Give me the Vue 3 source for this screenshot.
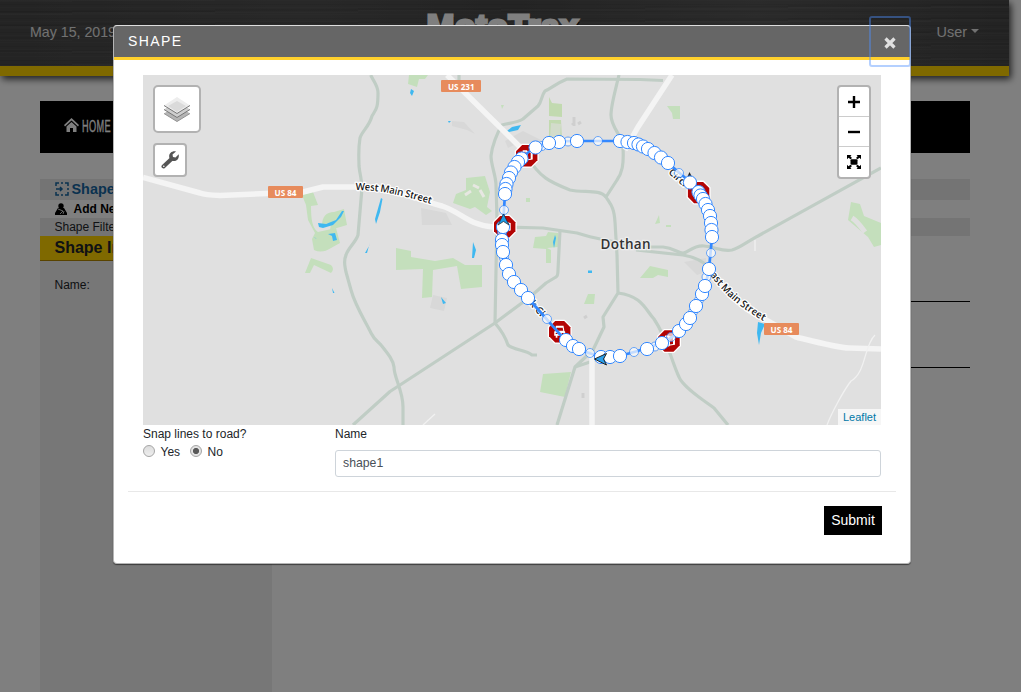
<script setup>
import { ref } from 'vue'

const snap = ref('no')
const name = ref('shape1')

const local = [
  'M370.7 75C375 84 378 86 378 93C378 109 376 109 372 116C369 127 362 131 360 138C358 150 359 158 359 166C360 176 362 180 362 188L358 235C356 242 348 248 346 255C343 262 345 266 346 272L351 290C355 305 364 319 371 333C375 341 378 341 381 345C389 355 393 360 394 367C394 378 403 390 403 407L403 425',
  'M353 425L390 391.500L495 323L530 297L546 283L556 277Q558 276 558 270L560 230',
  'M459 75V82',
  'M663 80.500L640 79.500L567 79C555 84 552 88 545 91C541 96 542 102 538 106L523 119C517 123 508 123 502 125C497 133 492 146 491 156C491 165 496 176 496 185L497 218L495 323C501 330 505 336 508 345C513 350 526 350 532 355H537',
  'M619 75C615 92 611 105 611 115C611 128 623 136 623 148C624 165 622 173 617 180L606 197C610 204 614 206 615 222L617 255L618 293L603 317L604 327L593 350L575 367L557 425',
  'M605 357L575 367',
  'M618 293C642 296 645 309 654 319C667 338 670 357 679 377C683 387 703 400 714 408L728 425',
  'M526 155C540 178 550 182 570 190C584 193 600 189 606 197',
  'M505 227L543 228L577 233C598 240 612 240 636 247L663 247C674 248 678 253 683 253C688 253 693 245 704 246C716 247 722 252 732 250C740 248 748 241 758 236L881 168',
  'M636 250L683 255Q700 258 708 267',
]
const major = [
  'M447 75L520 147',
  'M672 75L638 127L625 150',
  'M592 357V425',
  'M143 177.500L200 193Q205 195 220 195.500L303 192L323 187H362C395 188 422 201 442 206C463 213 466 224 493 227',
  'M708 267C725 294 744 310 766 320L796 337C820 343 839 348 849 348L881 349',
]
const parks = [
  'M302 195L313 192L318 205L311 206C311 218 312 228 318 232L336 228L340 243L331 248Q322 254 314 250L312 239L315 233L308 220L306 205Z',
  'M322 226Q322 212 334 212L344 209L347 225L330 230Q333 219 322 226Z',
  'M311 258L331 265Q335 269 331 273L314 265L310 273H305Z',
  'M396 248L411 251V257L435 261L453 258L465 265H482V287L461 289L457 266L433 270L432 297L422 298L423 269L396 270Z',
  'M466 178L485 176L490 192L487 207L492 211L486 215L475 207L470 209L453 203L456 194L466 190Z',
  'M409 75H428L425 79H419L417 87L408 84Z',
  'M535 237L546 236L548 232L558 233V247L547 248L551 250V263H546V249L533 248Z',
  'M543 374L571 372L565 397L540 392Z',
  'M667 106H680V119H673L672 113Z',
  'M640 278L650 266L668 270V277L658 275L653 278Z',
  'M851 202L860 204L864 216L881 223V245L874 247L868 237L848 220Z',
  'M659 215L660 223L655 224ZM666 225H671V227H666ZM674 171H680V175H674ZM501 105H504L502 109ZM526 198H530V202H526ZM588 294H595L594 304H584Z',
]
const water = [
  'M318 223L326 224L336 220L342 211L344 211L341 217L333 225L323 228L319 227Z',
  'M381 198L382.500 199L380 212L376 224L375 219Z',
  'M370 242L367 253L365 253L369 246Z',
  'M328 234L335 233L337 240L333 241L332 236ZM314 237L317 239L315 238Z',
  'M332 288L334.500 293H333Z',
  'M411 89L414 91L412 96L410 93Z', 'M448 121L451 121L449 123Z',
  'M507 131L512 127L521 125L518 130L509 132Z',
  'M473 242L476 250L474 258H472ZM441 297L446 303L443 304ZM588 270.500H592V273H588ZM555 235L556 238L554 248L553 242Z',
  'M758 322L765 324L761 333L759 345L757 333Z',
]
const dots = [
  [559, 142], [549, 143], [535.5, 147.5], [577, 141], [521.5, 158.5], [518, 162], [514.5, 167], [511, 172.5], [509, 178], [506.5, 184], [505.5, 189], [505, 194],
  [503, 227], [502, 240], [502, 245], [503, 252], [506, 265], [509, 274], [514, 282], [521, 290], [528, 298],
  [566, 340], [573, 346], [579, 349], [601, 357], [610, 357], [620, 356], [647, 349], [662, 343],
  [679, 331], [686, 324], [690, 318], [696, 306], [702, 294], [705, 286], [709, 269],
  [690, 182.500], [698.5, 192], [700.5, 195.5], [703, 199], [705.5, 204], [708, 210], [710, 216], [711, 223], [711.5, 230], [712, 237],
  [620, 141], [627.5, 142], [634, 143], [638.5, 144.500], [643, 146.500], [648, 149], [654.5, 153], [661, 157.500], [668, 163],
]
const mids = [[598, 141], [568, 141.500], [542, 146], [504, 210], [502, 233], [504, 258], [547, 319], [590, 353], [634, 352], [655, 346.500], [671, 337], [693, 312], [699, 300], [706.5, 277], [711, 253], [679, 173]]
const stops = [[526.7, 155.7, 90], [504.7, 226.7, 90], [559.7, 331.7, 0], [669, 341, 90], [698.6, 192.6, 0]]
const route = 'M577 141H620C640 141 655 153 668 163L690 182C703 195 712 215 712 237L709 269C704 295 698 308 687 323C673 341 658 345 634 352C620 356 615 357 601 357C585 352 574 348 565 340L528 298C511 283 503 268 502 240L505 194C507 173 521 157 535 147C546 141 560 141 577 141'
</script>

<template>
  <div class="page">
    <header class="top">
      <span class="date">May 15, 2019</span>
      <span class="logo">MotoTrax</span>
      <span class="user">User <i class="caret"></i></span>
    </header>
    <nav class="nav">
      <svg width="15" height="14" viewBox="0 0 15 14"><path d="M0 7L7.500 0L15 7L14 8.500L7.500 2.500L1 8.500Z" fill="#fff" /><path d="M2.500 8.500L7.500 4L12.500 8.500V14H9V10H6V14H2.500Z" fill="#fff" /></svg>
      <span>HOME</span>
    </nav>
    <main class="content">
      <div class="row title">
        <svg width="14" height="14" viewBox="0 0 14 14" fill="none" stroke="#14649f" stroke-width="1.500"><path d="M1 4V1H4M6 1H8M10 1H13V4M13 6V8M13 10V13H10M8 13H6M4 13H1V10" /><path d="M1 7H7M5 5L7 7L5 9" /></svg>
        Shape
      </div>
      <div class="row add">
        <svg width="12" height="12" viewBox="0 0 12 12"><circle cx="6" cy="3" r="2.700" /><path d="M3 5L0 10V12H12V10L9 5Z" /><path d="M3 6L8 8L5 11M9 8L8 11" stroke="#fff" stroke-width=".8" fill="none" /></svg>
        Add New Shape
      </div>
      <div class="row filter">Shape Filter</div>
      <div class="split">
        <aside class="side">
          <h2>Shape Information</h2>
          <label>Name:</label>
        </aside>
        <div class="detail"><div class="rule"></div></div>
      </div>
    </main>
  </div>

  <div class="backdrop">
    <section class="modal">
      <div class="modal-head">
        <span>SHAPE</span>
        <button class="close" aria-label="Close">
          <svg width="12" height="12" viewBox="0 0 12 12"><path d="M1.500 1.500L10.500 10.500M10.500 1.500L1.500 10.500" stroke="#e0e0e0" stroke-width="3.200" /></svg>
        </button>
      </div>
      <div class="modal-body">
        <div class="map">
          <svg class="canvas" width="738" height="350" viewBox="143 75 738 350">
            <defs>
              <path id="west" d="M355.500 190C378 190 400 194 437 206" />
              <path id="east" d="M710 275C728 299 744 310 772 326" />
            </defs>
            <rect x="143" y="75" width="738" height="350" fill="#e0e0e0" />
            <g fill="#d8d8d8">
              <path d="M421 208L446 213L452 225H422ZM452 121L464 122L475 134L467 130L452 126ZM505 141L523 131L541 140L545 147L530 150L518 143L508 148ZM684 262L706 258V272L697 275ZM433 295L447 298L444 311L430 308Z" />
              <path d="M573 123V125M574 117V126M578 124L581 122M584 318L587 316M583 393V398" stroke="#cfcfcf" stroke-width="3" />
            </g>
            <g fill="#c4dfbc"><path v-for="p in parks" :key="p" :d="p" /></g>
            <path d="M549 97L552 103L562 104V117L549 116ZM549 120H561L562 139L549 140Z" fill="#c2dab0" />
            <path d="M551 123L561 124L560 138H550Z" fill="#d3dccb" />
            <path d="M465 195L471 191M473 185L479 188M480 190L484 197" stroke="#e7e7e2" stroke-width="3" />
            <path d="M852 218Q857 221 865 232" stroke="#e0e0e0" stroke-width="5" fill="none" />
            <g fill="#3fb8f0"><path v-for="p in water" :key="p" :d="p" /></g>
            <g fill="none" stroke="#c0cdc5" stroke-width="3.200" stroke-linejoin="round"><path v-for="p in local" :key="p" :d="p" /></g>
            <g fill="none" stroke="#f4f4f4" stroke-width="5.500" stroke-linejoin="round"><path v-for="p in major" :key="p" :d="p" /></g>
            <path d="M423 425L435 414M755 240V251M827 425C832 412 844 390 851 381C866 373 864 345 875 335" stroke="#f1f1f1" stroke-width="1.300" fill="none" />

            <g class="shield">
              <rect x="268" y="186" width="35" height="12" rx="1" /><text x="274.500" y="195.500" textLength="22" lengthAdjust="spacingAndGlyphs">US 84</text>
              <rect x="441" y="80" width="40" height="12" rx="1" /><text x="448" y="89.500" textLength="26.500" lengthAdjust="spacingAndGlyphs">US 231</text>
              <rect x="764" y="323" width="35" height="12" rx="1" /><text x="770.500" y="332.500" textLength="22" lengthAdjust="spacingAndGlyphs">US 84</text>
            </g>
            <text class="street"><textPath href="#west" textLength="77">West Main Street</textPath></text>
            <text class="street"><textPath href="#east" textLength="71">ast Main Street</textPath></text>
            <text class="street" transform="translate(529 304) rotate(48)">k Ci</text>
            <text class="street" transform="translate(668 173) rotate(42)">Circl</text>
            <text class="city" x="600.500" y="249" textLength="50">Dothan</text>

            <path d="M689.500 172L695 183L686 180Z" fill="#222" />
            <g v-for="s in stops" :key="s[0]" :transform="`translate(${s[0]} ${s[1]})`">
              <path d="M-4.600 -11H4.600L11 -4.600V4.600L4.600 11H-4.600L-11 4.600V-4.600Z" fill="none" stroke="#fff" stroke-width="2" />
              <path d="M-4.500 -10.700H4.500L10.700 -4.500V4.500L4.500 10.700H-4.500L-10.700 4.500V-4.500Z" fill="#b30404" />
              <g :transform="`rotate(${s[2]})`">
                <path d="M-3.800 -6H3.800L4.600 -1L5.500 0V4H4V6H2.300V4H-2.300V6H-4V4H-5.500V0L-4.600 -1Z" fill="#fff" />
                <path d="M-3 -4H3L3.500 -1H-3.500ZM-4 1.200H-2V2.400H-4ZM2 1.200H4V2.400H2Z" fill="#b30404" />
              </g>
            </g>
            <path :d="route" fill="none" stroke="#3388ff" stroke-width="2.700" />
            <g fill="#fff" stroke="#3388ff" stroke-width="1">
              <circle v-for="m in mids" :key="m.join()" :cx="m[0]" :cy="m[1]" r="4.500" opacity=".7" />
              <circle v-for="d in dots" :key="d.join()" :cx="d[0]" :cy="d[1]" r="6.600" />
            </g>
            <path d="M503.500 214L509 225L503.500 221.500L498 225Z" fill="#1b9be8" stroke="#222" stroke-width=".7" />
            <path d="M594.500 359L606.500 353.500L603.500 359L606.500 365Z" fill="#2aa0ec" stroke="#222" stroke-width="1" stroke-linejoin="round" />
          </svg>

          <div class="tools">
            <button class="tool layers">
              <svg width="28" height="28" viewBox="0 0 28 28">
                <path d="M1 18.500L14 10L27 18.500L14 26.500Z" fill="#b5b5b5" /><path d="M1 18.500L14 26.500L27 18.500" fill="none" stroke="#929292" />
                <path d="M1 14.500L14 6L27 14.500L14 22.500Z" fill="#cecece" /><path d="M1 14.500L14 22.500L27 14.500" fill="none" stroke="#777" />
                <path d="M1 10.500L14 2L27 10.500L14 18.500Z" fill="#ededed" /><path d="M5 11L14 6L23 11L14 17Z" fill="#dadada" /><path d="M1 10.500L14 18.500L27 10.500" fill="none" stroke="#777" />
              </svg>
            </button>
            <button class="tool wrench">
              <svg width="18" height="18" viewBox="0 0 18 18"><path d="M2.500 15.500L10.500 8" stroke="#555" stroke-width="4" stroke-linecap="round" /><path d="M15 0.500L11.500 3.500L12 6L14.500 6.500L17.700 3.300C18.700 8.800 14 11.200 10.800 9.400L8.500 7.200C7 3.200 10.500 -0.500 15 0.500Z" fill="#555" /><circle cx="2.800" cy="15.300" r=".8" fill="#fff" /></svg>
            </button>
          </div>
          <div class="zoom">
            <button><svg width="14" height="14" viewBox="0 0 14 14"><path d="M1 7H13M7 1V13" stroke="#000" stroke-width="2.400" /></svg></button>
            <button><svg width="14" height="14" viewBox="0 0 14 14"><path d="M1 7H13" stroke="#000" stroke-width="2.400" /></svg></button>
            <button><svg width="14" height="14" viewBox="0 0 14 14"><rect x="3.500" y="4.300" width="7" height="5.400" rx="1" /><path d="M0 0H4.500L3.300 1.300L5 3L3.500 4.300L1.500 2.800L0 4.300ZM14 0H9.500L10.700 1.300L9 3L10.500 4.300L12.500 2.800L14 4.300ZM0 14H4.500L3.300 12.700L5 11L3.500 9.700L1.500 11.200L0 9.700ZM14 14H9.500L10.700 12.700L9 11L10.500 9.700L12.500 11.200L14 9.700Z" /></svg></button>
          </div>
          <span class="credit">Leaflet</span>
        </div>

        <div class="form">
          <div class="snap">
            <div class="label">Snap lines to road?</div>
            <div class="choices">
              <i class="radio" :class="{ on: snap === 'yes' }" @click="snap = 'yes'"></i><span>Yes</span>
              <i class="radio" :class="{ on: snap === 'no' }" @click="snap = 'no'"></i><span>No</span>
            </div>
          </div>
          <div class="field">
            <div class="label">Name</div>
            <input v-model="name" type="text" />
          </div>
        </div>
        <hr />
        <div class="actions"><button class="submit">Submit</button></div>
      </div>
    </section>
  </div>
</template>

<style>
html, body { margin: 0; overflow: hidden; background: #fff; }
</style>

<style scoped>
* { box-sizing: border-box; }
.page { height: 692px; overflow: hidden; font: 12px/18px "Liberation Sans", Arial, sans-serif; color: #212529; background: #fff; }
.top {
  width: 1009px; height: 76px; padding: 0 30px; display: flex; justify-content: space-between; align-items: flex-start;
  border-bottom: 10px solid #ffd200; box-shadow: 2px 3px 7px rgba(0, 0, 0, .75);
  color: #fff; font-size: 14px; line-height: 64px;
  background:
    repeating-linear-gradient(180deg, rgba(255,255,255,.025) 0 1px, transparent 1px 4px, rgba(0,0,0,.06) 4px 5px, transparent 5px 7px),
    repeating-linear-gradient(179.600deg, rgba(255,255,255,.03) 0 2px, transparent 2px 11px, rgba(0,0,0,.06) 11px 13px),
    linear-gradient(90deg, #484848, #515151 30%, #484848 50%, #565656 75%, #464646);
}
.date, .user { width: 200px; color: #e2e2e2; }
.date { font-size: 14.200px; }
.user { font-size: 14.400px; text-align: right; }
.logo { font-size: 33px; line-height: 36px; padding-top: 9px; margin-left: -3px; font-weight: 700; -webkit-text-stroke: 3px #fff; text-shadow: 2px 2px 0 #111; letter-spacing: .7px; }
.caret { display: inline-block; border: 4px solid transparent; border-top-color: #e2e2e2; border-bottom: 0; vertical-align: 4px; }
.nav { width: 930px; height: 52px; margin: 25px 0 0 40px; padding-left: 24px; background: #000; color: #fff; display: flex; align-items: center; gap: 3px; font-size: 17px; }
.nav svg { margin-top: -4px; }
.nav span { transform: scaleX(.54); transform-origin: left; letter-spacing: .6px; -webkit-text-stroke: .3px #fff; }
.content { width: 930px; margin: 26px 0 0 40px; }
.row { padding-left: 14.500px; display: flex; align-items: center; }
.title { height: 21px; padding-bottom: 2px; background: #e8e8e8; font-size: 14.400px; font-weight: 700; color: #14649f; gap: 3px; }
.add { height: 18px; font-weight: 700; color: #000; gap: 7px; }
.filter { height: 18px; background: #e8e8e8; }
.split { display: flex; }
.side { width: 232px; height: 460px; background: #eee; }
.side h2 { margin: 0; height: 25px; padding-left: 14.500px; overflow: hidden; background: #ffd200; border-bottom: 1px solid #b38600; font-size: 16px; line-height: 23px; }
.side label { display: block; padding: 15px 0 0 14.500px; }
.detail { flex: 1; padding-top: 65px; }
.rule { height: 67px; border: solid #000; border-width: 1px 0; }

.backdrop { position: absolute; inset: 0; padding: 25px 110px 0 113px; background: rgba(0, 0, 0, .5); font: 12px/18px "Liberation Sans", Arial, sans-serif; color: #212529; overflow: hidden; }
.modal { width: 798px; height: 539px; background: #fff; border: 1px solid #b5b5b5; border-top-color: #ddd; border-radius: 4px; box-shadow: 0 1px 1px rgba(0,0,0,.5); }
.modal-head { position: relative; height: 34px; padding-left: 14px; border-bottom: 3px solid #ffd02c; background: #666; border-radius: 3px 3px 0 0; color: #fff; font-size: 14px; line-height: 30px; letter-spacing: 1.400px; }
.close { position: absolute; right: -1px; top: -10px; width: 42px; height: 51px; padding: 2px 0 0; border: 2px solid rgba(77, 144, 254, .42); border-radius: 3px; background: none; display: grid; place-items: center; }
.modal-body { padding: 15px 14px 0; }
.map { position: relative; width: 738px; height: 350px; margin-left: 15px; overflow: hidden; }
.canvas { display: block; }
.shield rect { fill: #e78b5c; }
.shield text { fill: #fff; font: 700 8.500px "Noto Sans", "Open Sans", sans-serif; }
.street { font: 600 10px "Open Sans", sans-serif; fill: #181818; stroke: #fff; stroke-width: 2.500px; paint-order: stroke; stroke-linejoin: round; }
.city { font: 600 13.500px "Open Sans", sans-serif; fill: #333; stroke: #eee; stroke-width: 2.500px; paint-order: stroke; }
.tools { position: absolute; left: 10px; top: 10px; display: flex; flex-direction: column; gap: 10px; }
.tool { padding: 0; background: #fff; border: 2px solid #b2b2b2; border-radius: 5px; display: grid; place-items: center; }
.layers { width: 48px; height: 48px; }
.wrench { width: 34px; height: 34px; border-radius: 4px; }
.zoom { position: absolute; right: 10px; top: 10px; width: 34px; height: 94px; border: 2px solid #b2b2b2; border-radius: 4px; background: #fff; display: flex; flex-direction: column; }
.zoom button { height: 30px; padding: 0; border: 0; border-bottom: 1px solid #ccc; background: none; display: grid; place-items: center; }
.zoom button svg { margin-left: -1px; }
.zoom button:last-child { border: 0; }
.credit { position: absolute; right: 0; bottom: 0; height: 16px; padding: 0 5px; background: rgba(255,255,255,.7); color: #0078a8; font-size: 11px; line-height: 16px; }
.form { display: flex; padding-left: 15px; }
.snap { width: 192px; }
.choices { display: flex; align-items: center; height: 17px; }
.choices span { margin: 1px 10px 0 5.500px; }
.radio { width: 12px; height: 12px; margin-top: -1px; border: 1px solid #a5a5a5; border-radius: 50%; background: linear-gradient(#ddd, #eee); }
.radio.on { background: radial-gradient(circle, #595959 0 2.700px, #e3e3e3 3.500px); }
.field { width: 546px; }
.field input { display: block; width: 100%; height: 27px; margin-top: 7px; padding: 0 7px 2px; border: 1px solid #ced4da; border-radius: 3px; color: #495057; font: 12.250px "Liberation Sans", Arial, sans-serif; outline: none; }
hr { height: 1px; margin: 14px 0; border: 0; background: #e8e8e8; }
.actions { display: flex; justify-content: flex-end; padding-right: 14px; }
.submit { width: 58px; height: 29px; padding: 0 0 2px; border: 0; background: #000; color: #fff; font: 14px "Liberation Sans", Arial, sans-serif; }
</style>
